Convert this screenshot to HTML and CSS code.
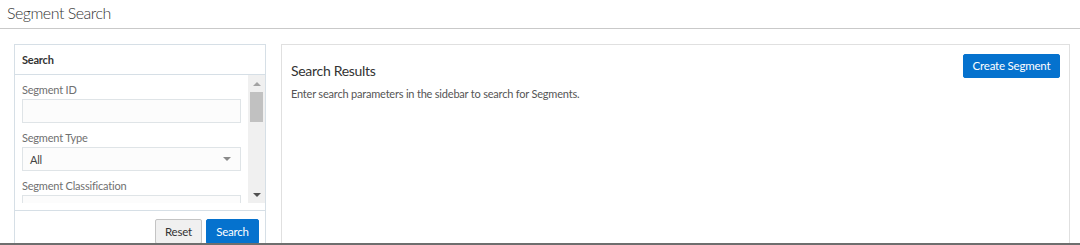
FILE: index.html
```html
<!DOCTYPE html>
<html lang="en">
<head>
<meta charset="utf-8">
<title>Segment Search</title>
<link rel="stylesheet" href="styles.css">
</head>
<body>
<header class="page-header">
  <h1 class="page-title">Segment Search</h1>
</header>
<main class="main">
  <aside class="sidebar">
    <div class="sidebar-head">Search</div>
    <div class="sidebar-body">
      <div class="scroll-area">
        <div class="form">
          <label class="field-label">Segment ID</label>
          <div class="input"></div>
          <label class="field-label">Segment Type</label>
          <div class="input select"><span>All</span><span class="caret"></span></div>
          <label class="field-label">Segment Classification</label>
          <div class="input"></div>
          <label class="field-label">Segment Name</label>
          <div class="input"></div>
        </div>
        <div class="scrollbar">
          <div class="sb-arrow up"></div>
          <div class="sb-track"><div class="sb-thumb"></div></div>
          <div class="sb-arrow down"></div>
        </div>
      </div>
    </div>
    <div class="sidebar-foot">
      <button class="btn btn-default">Reset</button>
      <button class="btn btn-primary">Search</button>
    </div>
  </aside>
  <section class="results">
    <div class="results-top">
      <h2 class="results-title">Search Results</h2>
      <button class="btn btn-primary btn-create">Create Segment</button>
    </div>
    <p class="results-text">Enter search parameters in the sidebar to search for Segments.</p>
  </section>
</main>
<div class="bottom-line"></div>
</body>
</html>
```
FILE: styles.css
```css
* { box-sizing: border-box; }
html, body { margin: 0; padding: 0; }
body {
  width: 1080px;
  height: 245px;
  overflow: hidden;
  background: #fff;
  font-family: "Lato", "Noto Sans", sans-serif;
  font-size: 11px;
  letter-spacing: -0.2px;
  color: #333;
}
.page-header {
  height: 29px;
  border-bottom: 1px solid #c9c9c9;
  padding-left: 7px;
  display: flex;
  align-items: center;
}
.page-title {
  margin: 0 0 2px 0;
  font-size: 16px;
  font-weight: 300;
  letter-spacing: -0.5px;
  color: #333;
  line-height: 20px;
}
.main {
  height: 214px;
  padding: 15px 10px 0 14px;
  display: flex;
  gap: 15px;
  overflow: hidden;
}
.sidebar {
  width: 252px;
  flex: 0 0 252px;
  height: 240px;
  border: 1px solid #d6dfe6;
  display: flex;
  flex-direction: column;
}
.sidebar-head {
  height: 30px;
  border-bottom: 1px solid #d6dfe6;
  padding-left: 7px;
  display: flex;
  align-items: center;
  font-weight: 700;
  color: #333;
}
.sidebar-body {
  height: 136px;
  border-bottom: 1px solid #d6dfe6;
  padding-bottom: 7px;
}
.scroll-area {
  height: 128px;
  display: flex;
  overflow: hidden;
}
.form {
  flex: 1;
  padding: 7px 7px 0 7px;
  display: flex;
  flex-direction: column;
}
.field-label {
  line-height: 16px;
  color: #707070;
  margin-bottom: 1px;
}
.input {
  height: 24px;
  flex: 0 0 24px;
  border: 1px solid #dfe4e7;
  background: #fcfcfc;
  margin-bottom: 7px;
  display: flex;
  align-items: center;
  padding: 0 8px 0 7px;
  color: #444;
}
.select { justify-content: space-between; }
.caret {
  width: 0; height: 0;
  border-left: 4px solid transparent;
  border-right: 4px solid transparent;
  border-top: 4px solid #8a8a8a;
  margin-right: 1px;
}
.scrollbar {
  width: 17px;
  flex: 0 0 17px;
  background: #f0f0f0;
  display: flex;
  flex-direction: column;
}
.sb-arrow {
  height: 17px;
  flex: 0 0 17px;
  display: flex;
  align-items: center;
  justify-content: center;
}
.sb-arrow::before {
  content: "";
  width: 0; height: 0;
  border-left: 4px solid transparent;
  border-right: 4px solid transparent;
}
.sb-arrow.up::before { border-bottom: 4px solid #a3a3a3; }
.sb-arrow.down::before { border-top: 4px solid #505050; }
.sb-track { flex: 1; padding: 0 2px; }
.sb-thumb {
  height: 30px;
  background: #c1c1c1;
}
.sidebar-foot {
  padding: 8px 6px 0 0;
  display: flex;
  justify-content: flex-end;
  gap: 4px;
}
.btn {
  font-family: inherit;
  font-size: 11.5px;
  letter-spacing: -0.2px;
  height: 25px;
  line-height: 23px;
  padding: 0;
  border: 1px solid transparent;
  border-radius: 2px;
  cursor: pointer;
}
.btn-default {
  width: 47px;
  background: #f0f0f0;
  border-color: #c4c4c4;
  color: #333;
}
.btn-primary {
  background: #0572ce;
  border-color: #0572ce;
  color: #fff;
}
.sidebar-foot .btn-primary { width: 53px; }
.results {
  flex: 1;
  height: 240px;
  border: 1px solid #e0e0e0;
  padding: 9px 9px 0 9px;
}
.results-top {
  display: flex;
  justify-content: space-between;
  align-items: flex-start;
}
.btn-create {
  width: 97px;
  height: 24px;
  line-height: 22px;
}
.results-title {
  margin: 7px 0 0 0;
  font-size: 14px;
  font-weight: 400;
  letter-spacing: -0.3px;
  color: #333;
  line-height: 20px;
}
.results-text {
  margin: 5px 0 0 0;
  color: #555;
  line-height: 16px;
}
.bottom-line {
  height: 2px;
  background: #6e6e6e;
}
```
